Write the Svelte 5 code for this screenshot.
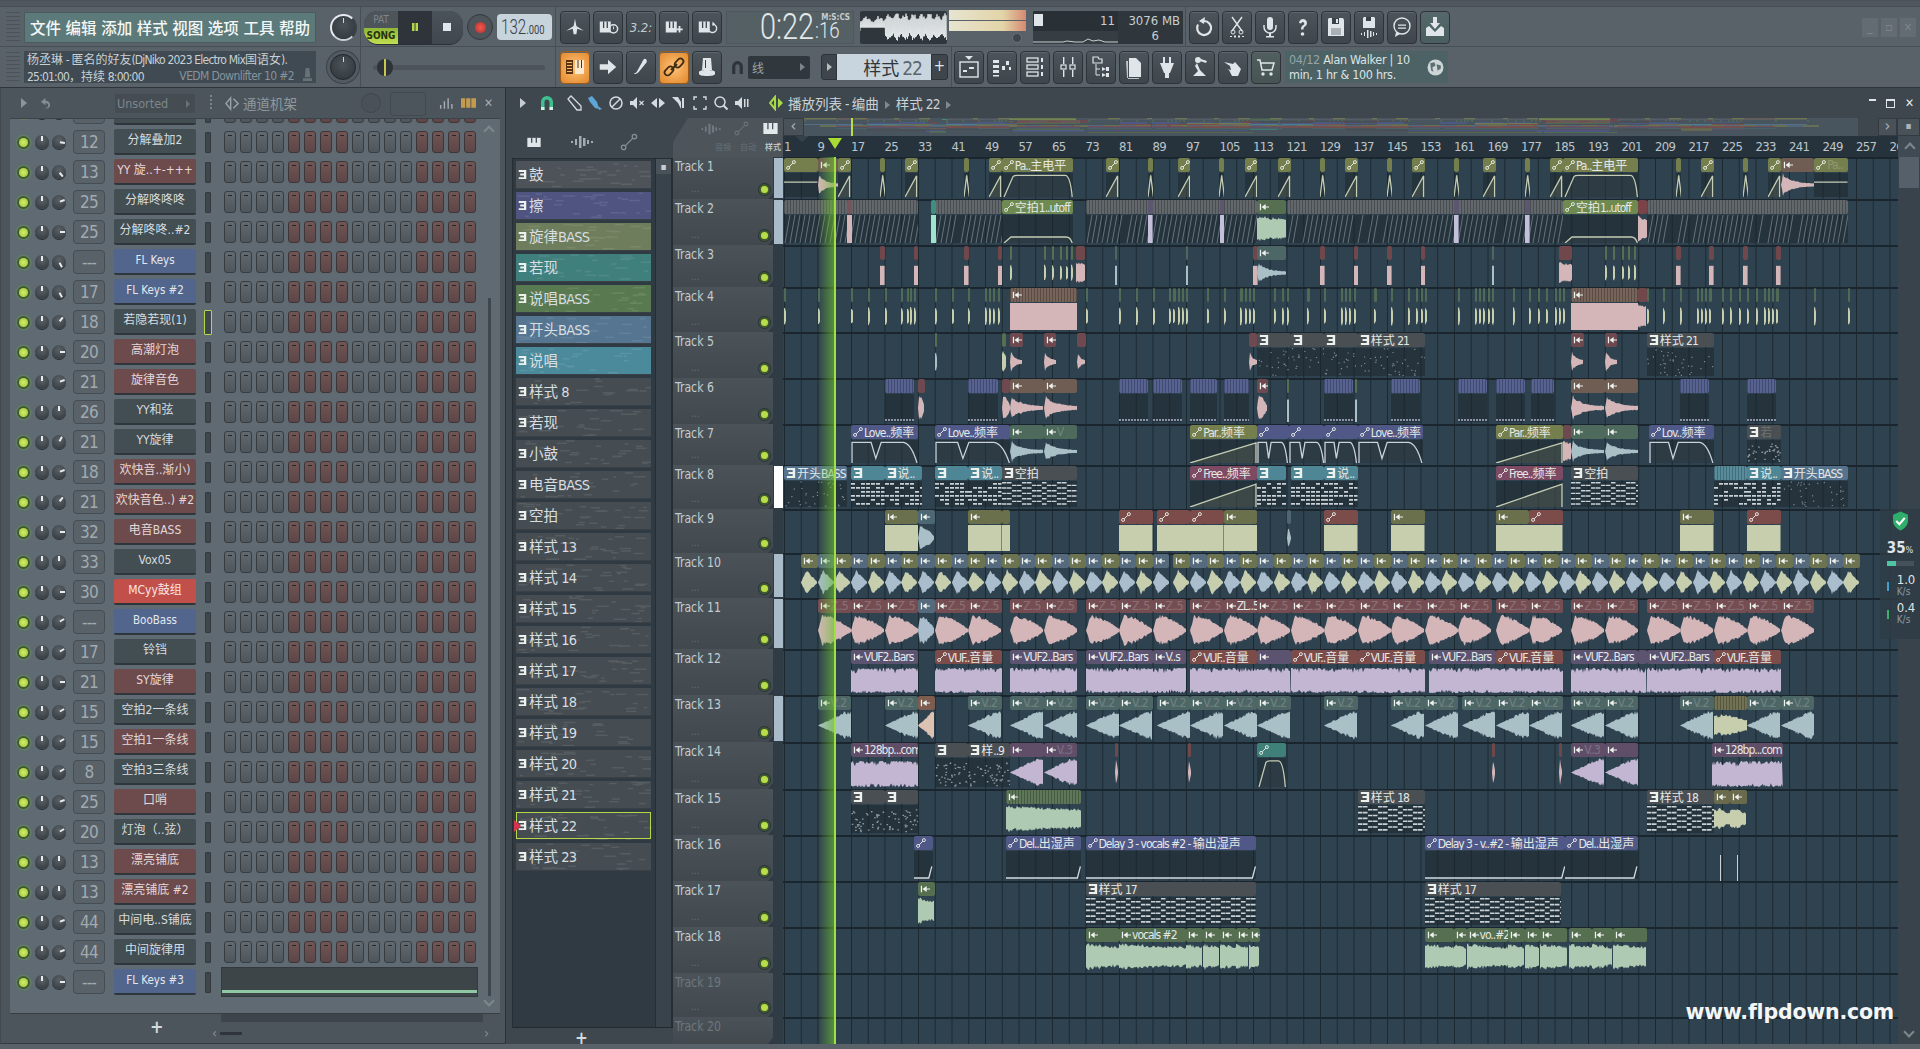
<script>
  const rng = (seed) => {
    let s = (seed * 7919 + 17) % 233280;
    return () => (s = (s * 9301 + 49297) % 233280) / 233280;
  };
  const f = (n) => Math.round(n * 10) / 10;
  // split a label in latin and chinese runs, the latin ones get squeezed
  const runs = (s) => s.split(/([\u3000-\u9fff\uff00-\uffef]+)/).filter(Boolean).map((t) => ({ t, cj: /[\u3000-\u9fff\uff00-\uffef]/.test(t) }));

  // ---------- toolbar icons ----------
  const slit = '#3a4248';
  const piano = `<path d="M3 6h12v12H3z"/><path fill="${slit}" d="M6.5 6h1.4v7H6.5zM10.5 6h1.4v7h-1.4z"/>`;
  const icons = {
    tuner: '<path d="M12 3l1.5 8 8 5-7-2-1 6h-3l-1-6-7 2 8-5z"/>',
    clock: piano + '<circle cx="18" cy="14" r="4.5" fill="none" stroke="#dfe5e8" stroke-width="1.6"/><path d="M17.5 11.5h1v3h-1z"/>',
    add: piano + '<path d="M17 11h2v2.500h2.500v2H19V18h-2v-2.500h-2.500v-2H17z"/>',
    loop: piano + '<path d="M18 9a4.500 4.500 0 1 1-4 2.500" fill="none" stroke="#dfe5e8" stroke-width="1.500"/><path d="M18 6l3 3-3 2z"/>',
    reset: '<path d="M12 6a7 7 0 1 1-6 3.500" fill="none" stroke="#dfe5e8" stroke-width="2.200"/><path d="M13 2l-1 7-5-3z"/>',
    scissors: '<path d="M7 2l10 14M17 2L7 16" stroke="#dfe5e8" stroke-width="1.400" fill="none"/><circle cx="8" cy="17" r="2" fill="none" stroke="#dfe5e8"/><circle cx="16" cy="17" r="2" fill="none" stroke="#dfe5e8"/><path d="M5 21h2v1H5zM9 20.500h2v2H9zM13 20.500h2v2h-2zM17 21h2v1h-2z"/>',
    mic: '<rect x="9" y="2" width="6" height="13" rx="3"/><path d="M6 10v2a6 6 0 0 0 12 0v-2" fill="none" stroke="#dfe5e8" stroke-width="1.500"/><path d="M11 18h2v3h3v1.500H8V21h3z"/>',
    help: '<path d="M8 8a4 4 0 1 1 6 3.500c-1.300.8-1.500 1.500-1.500 3h-2.500c0-2.500.6-3.500 2-4.300 1-.6 1.300-1 1.300-1.700a1.500 1.500 0 0 0-3 0z"/><circle cx="11.500" cy="19" r="1.800"/>',
    save: '<path d="M5 3h14l1 2v16H4V4z"/><path fill="#3a4248" d="M8 3h7v6H8z"/><path fill="#dfe5e8" d="M12 4h2v4h-2z"/><path fill="#aab2b8" d="M7 13h10v7H7z"/>',
    savewave: '<path d="M7 2h10l1 1v10H6V3z"/><path fill="#3a4248" d="M9 2h5v4H9z"/><path d="M4 18h1v2H4zM7 17h1v4H7zM10 15h1.500v8H10zM13 16h1.500v6H13zM16 17h1v4h-1zM19 18h1v2h-1z"/>',
    chat: '<circle cx="12" cy="11" r="8" fill="none" stroke="#dfe5e8" stroke-width="1.400"/><path d="M8 9.500h8v1.200H8zM8 12.500h8v1.200H8zM6 17l-1 5 5-3z"/>',
    download: '<path d="M10 2h4v6h3l-5 6-5-6h3z"/><path d="M3 13l3-2 6 6 6-6 3 2v8H3z"/>',
    arrow: '<path d="M3 9h9V4l9 8-9 8v-5H3z"/>',
    tail: '<path d="M16 3c2 0 3 2 2 4l-8 10c-2 3-5 3-6 2 2 0 3-1 4-3l5-9c1-2 2-4 3-4z"/>',
    link: '<path d="M9 15l6-6" stroke="#3c2a12" stroke-width="2" fill="none"/><rect x="2" y="13" width="10" height="6" rx="3" transform="rotate(-45 7 16)" fill="none" stroke="#3c2a12" stroke-width="1.700"/><rect x="12" y="5" width="10" height="6" rx="3" transform="rotate(-45 17 8)" fill="none" stroke="#3c2a12" stroke-width="1.700"/>',
    stack: '<path d="M8 3h8l1 12H7z"/><path d="M4 17c0-1 2-2 8-2s8 1 8 2v2c0 1-3 2-8 2s-8-1-8-2z"/><path fill="#3a4248" d="M10 5h1v8h-1z"/>',
    roll: '<path d="M3 5h7v14H3z" fill="#5a3410"/><path fill="#ffb765" d="M4 7h5v1H4zM4 10h5v1H4zM4 13h5v1H4zM4 16h5v1H4z"/><path fill="#fbe8cf" d="M12 5h9v14h-9z"/><path fill="#5a3410" d="M14.500 5h1v8h-1zM18 5h1v8h-1z"/>',
    plist: '<path d="M8 1h8l-4 4z"/><rect x="3" y="7" width="18" height="15" fill="none" stroke="#dfe5e8" stroke-width="1.400"/><path d="M6 15h4v2H6zM12 12h5v2h-5z"/>',
    steps: '<path d="M3 5h6v3H3zM3 10h6v3H3zM3 15h6v3H3zM3 20h6v1.500H3z"/><path d="M12 11h3v4h-3zM16 6h3v4h-3zM19 12h2v3h-2z"/>',
    chans: '<g fill="none" stroke="#dfe5e8" stroke-width="1.300"><rect x="4" y="3" width="11" height="4"/><rect x="4" y="10" width="11" height="4"/><rect x="4" y="17" width="11" height="4"/></g><path d="M18 3h2v4h-2zM18 10h2v4h-2zM18 17h2v4h-2z"/>',
    mixer: '<path d="M7 2h1.400v7H7zM7 15h1.400v7H7zM16 2h1.400v7H16zM16 15h1.400v7H16z"/><g fill="none" stroke="#dfe5e8" stroke-width="1.200"><rect x="5" y="10" width="5" height="4"/><rect x="14" y="10" width="5" height="4"/></g>',
    tree: '<path d="M4 2h5l1 2h3v4H4z" fill="none" stroke="#dfe5e8" stroke-width="1.200"/><path d="M7 9v11h4M7 14h4" fill="none" stroke="#dfe5e8"/><path d="M13 12l4 2-4 2zM17 12h3v4h-3zM13 18l4 2-4 2zM17 18h3v4h-3z"/>',
    docs: '<path d="M7 3h7l5 5v14H7z"/><path d="M4 6h2v18h11v-1H5z" opacity=".8"/>',
    plug: '<path d="M8 2h2v6H8zM14 2h2v6h-2zM5 8h14l-4 10h-1v5h-4v-5H9z"/>',
    pedal: '<circle cx="10" cy="5" r="3"/><path d="M9 8l3 7 6 6H5l5-5-3-5zM13 4l6 2-1 2-6-2z"/>',
    hand: '<path d="M3 7l9 2 2-2 6 7-3 7H11l-3-6-2-1 4 1-1-4z"/>',
    cart: '<path d="M3 5h3l2 10h10l2-7H7" fill="none" stroke="#dfe5e8" stroke-width="1.500"/><circle cx="9" cy="19" r="1.700"/><circle cx="17" cy="19" r="1.700"/>'
  };
  const rowOneLeft = ['tuner', 'clock', null, 'add', 'loop'];
  const rowOneRight = ['reset', 'scissors', 'mic', 'help', 'save', 'savewave', 'chat', 'download'];
  const rowTwoRight = ['plist', 'steps', 'chans', 'mixer', 'tree', 'docs', 'plug', 'pedal', 'hand', 'cart'];
  const menu = ['文件', '编辑', '添加', '样式', '视图', '选项', '工具', '帮助'];

  // ---------- channel rack ----------
  const channels = [
    ['12', '分解叠加2', 'd', 100], ['13', 'YY  旋..+-+++', 'r', 140], ['25', '分解咚咚咚', 'd', 70], ['25', '分解咚咚..#2', 'd', 90],
    ['---', 'FL Keys', 'b', 150], ['17', 'FL Keys #2', 'b', 150], ['18', '若隐若现(1)', 'd', 40], ['20', '高潮灯泡', 'r', 90],
    ['21', '旋律音色', 'r', 70], ['26', 'YY和弦', 'd', 0], ['21', 'YY旋律', 'd', 30], ['18', '欢快音..渐小)', 'r', 70],
    ['21', '欢快音色..) #2', 'r', 40], ['32', '电音BASS', 'r', 90], ['33', 'Vox05', 'd', 0], ['30', 'MCyy鼓组', 'h', 90],
    ['---', 'BooBass', 'b', 60], ['17', '铃铛', 'd', 60], ['21', 'SY旋律', 'r', 90], ['15', '空拍2一条线', 'd', 60],
    ['15', '空拍1一条线', 'r', 60], ['8', '空拍3三条线', 'd', 60], ['25', '口哨', 'r', 70], ['20', '灯泡（..弦）', 'd', 60],
    ['13', '漂亮铺底', 'r', 0], ['13', '漂亮铺底 #2', 'r', 0], ['44', '中间电..S铺底', 'd', 70], ['44', '中间旋律用', 'd', 70],
    ['---', 'FL Keys #3', 'b', 90]
  ];
  const stepCells = Array.from({ length: 16 }, (_, i) => (i >= 4 && i < 8) || i >= 12);

  // ---------- pattern picker ----------
  const patterns = [
    ['鼓', 'c0'], ['擦', 'c1'], ['旋律BASS', 'c2'], ['若现', 'c3'], ['说唱BASS', 'c4'], ['开头BASS', 'c5'], ['说唱', 'c6'],
    ['样式 8', ''], ['若现', ''], ['小鼓', ''], ['电音BASS', ''], ['空拍', ''], ['样式 13', ''], ['样式 14', ''], ['样式 15', ''],
    ['样式 16', ''], ['样式 17', ''], ['样式 18', ''], ['样式 19', ''], ['样式 20', ''], ['样式 21', ''], ['样式 22', 'sel'], ['样式 23', '']
  ].map(([name, cls], i) => {
    const r = rng(i + 3);
    let d = '';
    for (let k = 0; k < 26; k++) {
      const w = f(3 + r() * 10);
      d += `M${f(r() * 130)} ${f(r() * 26)}h${w}v1.500h-${w}z`;
    }
    return { name, cls, d };
  });

  // ---------- playlist ----------
  const tops = [157, 199, 245, 287, 332, 378, 424, 465, 509, 553, 598, 649, 695, 742, 789, 835, 881, 927, 973, 1017, 1044];
  const tracks = tops.slice(0, -1).map((t, i) => ({ n: i + 1, h: tops[i + 1] - t }));
  const strips = { 0: '#a9bbc9', 1: '#a9bbc9', 7: '#ffffff', 9: '#a9bbc9', 10: '#a9bbc9', 12: '#a9bbc9' };
  const barLabels = Array.from({ length: 34 }, (_, i) => 1 + i * 8);
  const barX = (b) => 1 + (b - 1) * 4.1875;

  const OLIVE = '#757f4e', BROWN = '#6f5c52', RED = '#744e52', REDA = '#7c4c4a', PURP = '#5b5370', GRN = '#566f50', TEAL = '#4d6666',
    BLUE = '#4f5886', SLATE = '#566a7e', GREY = '#4a4f53', AQUA = '#4f8695', LGRN = '#6f8a50', STR = '#4f5a8a';
  const PINK = '#d4b6b8', CREAM = '#c6ceae', MINT = '#aecab2', ICE = '#a9c0c6', LILAC = '#c2b6d2', SKY = '#a9bdcc';

  const wave = (w, h, fn, seed, jit = 0.25) => {
    const r = rng(seed), m = h / 2;
    let up = `M0 ${f(m)}`, dn = '';
    for (let x = 0; x <= w; x += 1) {
      const a = fn(x / Math.max(w, 1)) * m * (1 - jit + jit * r());
      up += `L${x} ${f(m - a)}`;
      dn = `L${x} ${f(m + a * (0.85 + 0.15 * r()))}` + dn;
    }
    return up + dn + 'Z';
  };
  const waves = {
    decay: (u) => (u < 0.06 ? u / 0.06 : 0.12 + 0.88 * Math.exp(-3.2 * u)),
    fat: (u) => Math.min(1, u * 8) * (1 - 0.92 * u * u),
    rise: (u) => Math.min(1, u * 1.25 + 0.01),
    diamond: (u) => Math.max(0.03, u < 0.3 ? u / 0.3 : (1 - u) / 0.7),
    block: () => 1,
    tap: (u) => 1 - 0.25 * u,
    spike: (u) => (u < 0.2 ? 0.7 : 1 - u * 0.6)
  };
  const pats = (kind, w, h, seed) => {
    const r = rng(seed);
    let d = '';
    if (kind === 'sparse') {
      for (let i = 0; i < w * 0.55; i++) d += `M${f(r() * w)} ${f(r() * h)}h1.200v1.200h-1.200z`;
    } else if (kind === 'zig') {
      for (let x = 0, c = 0; x < w; x += 5, c++) for (let y = 0; y < 9; y++) {
        if ((c + y * 2 + Math.floor(c / 8)) % 4 < 2) d += `M${x} ${f(1 + y * (h - 2) / 9)}h${Math.min(4.500, w - x)}v${f(h / 18)}h-${Math.min(4.500, w - x)}z`;
      }
    } else if (kind === 'rows') {
      for (let x = 0; x < w; x += 5) for (let y = 0; y < 6; y++) {
        if (r() > 0.45 || y === 3) d += `M${x} ${f(2 + y * (h - 2) / 6)}h${Math.min(4, w - x)}v1.800h-${Math.min(4, w - x)}z`;
      }
    } else if (kind === 'mid') {
      for (let i = 0; i < w * 1.1; i++) d += `M${f(r() * w)} ${f(h * 0.15 + r() * h * 0.8)}h1.600v1.300h-1.600z`;
    }
    return d;
  };

  const clips = [];
  let seed = 1;
  const add = (t, s, e, color, icon = '', label = '', shape = '', fill = '', head = '') => {
    const w = Math.max(f((e - s) * 4.1875), 2);
    const h = tops[t + 1] - tops[t] - 3;
    const bh = Math.max(h - 15, 4);
    seed += 1;
    let d = '', stroke = 'none', sw = 1.3, dark = true, fl = fill || 'none';
    if (waves[shape]) { d = wave(w, bh, waves[shape], seed); dark = false; }
    else if (shape === 'noise') {
      const r = rng(seed);
      d = `M0 ${bh}`;
      for (let x = 0; x <= w; x += 1) d += `L${x} ${f(bh * 0.1 + r() * r() * bh * 0.22)}`;
      d += `L${w} ${bh}`;
      for (let x = w; x >= 0; x -= 1) d += `L${x} ${f(bh - r() * r() * bh * 0.14)}`;
      d += 'Z';
      dark = false;
    } else if (shape === 'solid') { d = `M0 0H${w}V${bh}H0Z`; dark = false; }
    else if (shape === 'low') { d = `M0 ${f(bh * 0.2)}H${w}V${bh}H0Z`; dark = false; }
    else if (shape === 'flat') { d = `M0 ${f(bh * 0.38)}H${w}`; stroke = '#c4cdb4'; }
    else if (shape === 'ramp') { d = `M0 ${bh}L${w - 1} ${f(bh * 0.12)}V${bh}`; stroke = '#c4cdb4'; fl = 'rgba(140,150,110,.22)'; }
    else if (shape === 'peak') { d = `M0 ${bh}L${f(w * 0.5)} ${f(bh * 0.1)}L${w} ${bh}`; stroke = '#c4cdb4'; }
    else if (shape === 'trap') { const k = Math.min(8, w * 0.2); d = `M2 ${bh}L${f(k + 3)} ${f(bh * 0.15)}Q${f(k + 4)} ${f(bh * 0.1)} ${f(k + 7)} ${f(bh * 0.1)}H${w - 8}Q${w - 3} ${f(bh * 0.1)} ${w - 1} ${bh}`; stroke = '#c4cdb4'; fl = 'rgba(255,255,255,.04)'; }
    else if (shape === 'trapl') { d = `M2 ${bh}L9 ${bh - 6}H${w - 7}Q${w - 3} ${bh - 6} ${w - 1} ${bh}`; stroke = '#c4cdb4'; fl = 'rgba(255,255,255,.04)'; }
    else if (shape === 'notch') { d = `M1 ${bh}V${f(bh * 0.1)}H${f(w * 0.3)}L${f(w * 0.37)} ${f(bh * 0.8)}L${f(w * 0.45)} ${f(bh * 0.1)}H${f(w * 0.78)}Q${f(w * 0.9)} ${f(bh * 0.15)} ${w - 1} ${bh}`; stroke = '#c9d2dc'; fl = 'rgba(255,255,255,.04)'; }
    else if (shape === 'hold') { d = `M0 ${bh - 1}H${w - 4}L${w - 1} ${f(bh * 0.55)}`; stroke = '#d5dbe2'; }
    else if (shape === 'hatch') {
      const r = rng(seed);
      for (let x = 1; x < w; x += 5) if (r() > 0.08) d += `M${x} ${bh}L${x + 5} 0`;
      stroke = 'rgba(190,200,205,.55)'; sw = 0.8;
    } else if (shape === 'dotted') {
      for (let x = 0; x < w; x += 3) d += `M${x} ${bh - 3}h2v2h-2z`;
      fl = '#8c93a8';
    } else if (['sparse', 'zig', 'rows', 'mid'].includes(shape)) { d = pats(shape, w, bh, seed); }
    if (shape === 'sparse') fl = '#7f8a90';
    else if (shape === 'zig' || shape === 'rows') fl = fill || '#c9d1d5';
    else if (shape === 'mid') fl = '#8e989d';
    clips.push({ x: barX(s), y: tops[t] - 157 + 1, w, h, bh, color, icon, label: runs(label), d, fl, stroke, sw, dark, head });
  };
  const many = (t, list, fn) => list.forEach((l) => (Array.isArray(l) ? fn(t, l[0], l[1]) : fn(t, l, l + 0.8)));

  // track 1
  add(0, 1, 9, OLIVE, 'a', '', 'flat');
  add(0, 9, 14, BROWN, 'w', '', 'decay', PINK);
  many(0, [[14, 17], [30, 33], [50, 53], [78, 81], [95, 98], [111, 114], [119, 122], [135, 138], [151, 154], [168, 171], [184, 187], [220, 223], [236, 239]], (t, a, b) => add(t, a, b, OLIVE, 'a', '', 'ramp'));
  many(0, [24, 44, 88, 105, 129, 145, 161, 178, 214, 230], (t, a) => add(t, a - 0.1, a + 1.2, OLIVE, '', '', 'peak'));
  add(0, 53, 70, OLIVE, 'a', 'Pa..主电平', 'trap');
  add(0, 187, 205, OLIVE, 'a', 'Pa..主电平', 'trap');
  add(0, 239, 247, BROWN, 'w', '', 'decay', PINK);
  add(0, 247, 255, OLIVE, 'a', 'Pa..', 'flat', '', 'dl');
  // track 2
  many(1, [[1, 33], [37, 53], [73, 114], [121, 187], [207, 255]], (t, a, b) => add(t, a, b, '#5a5f63', '', '', 'hatch', '', 'hs'));
  add(1, 36, 37.2, '#3f8f80', '', '', 'solid', '#9fe3cb');
  add(1, 16, 17.2, '#75545a', '', '', 'solid', PINK);
  many(1, [88, 105, 161, 178], (t, a) => add(t, a, a + 1.1, '#5d5670', '', '', 'solid', '#c4c0dc'));
  add(1, 53, 70, LGRN, 'a', '空拍1..utoff', 'trapl');
  add(1, 187, 205, LGRN, 'a', '空拍1..utoff', 'trapl');
  add(1, 114, 121, GRN, 'w', '', 'tap', MINT);
  add(1, 205, 207.200, '#7a4348', '', '', 'tap', PINK);
  // track 3
  many(2, [24, 32, 44, 52, 113, 129, 137, 145, 153, 214, 222, 230, 238], (t, a) => add(t, a, a + 1.1, '#70484c', '', '', 'low', PINK));
  many(2, [55, 63, 65, 67, 68.4, 69.6, 197, 199, 201, 202.6, 204], (t, a) => add(t, a, a + 0.5, GRN, '', '', 'spike', CREAM));
  many(2, [80, 97, 170], (t, a) => add(t, a, a + 0.5, '#4d6660', '', '', 'low', ICE));
  add(2, 70.7, 73, '#70484c', '', '', 'tap', PINK);
  add(2, 186, 189.3, '#70484c', '', '', 'tap', PINK);
  add(2, 114, 121, TEAL, 'w', '', 'decay', ICE);
  // track 4
  const pulses = [1, 9, 17, 21, 25, 29, 30.4, 31, 32, 37, 41, 45, 49, 50, 51, 52, 73, 81, 85, 89, 93, 94, 95, 96, 97, 102, 106, 110, 111, 112, 113, 118, 120, 121, 126, 130, 134, 135, 136, 137, 142, 146, 150, 152, 153, 154, 162, 166, 167, 168, 169, 170, 175, 179, 181, 183, 185, 186, 187, 207, 211, 215, 219, 220, 221, 222, 225, 227, 229, 231, 233, 235, 236, 237, 238, 247, 255];
  many(3, pulses, (t, a) => add(t, a, a + 0.5, '#4f6a55', '', '', 'spike', CREAM));
  add(3, 55, 71, BROWN, 'w', '', 'solid', PINK, 'hs');
  add(3, 189, 205, BROWN, 'w', '', 'solid', PINK, 'hs');
  add(3, 205, 207, '#70484c', 'w', '', 'tap', PINK);
  // track 5
  add(4, 37, 37.4, GRN, '', '', 'spike', ICE);
  add(4, 53, 54, GRN, '', '', 'spike', CREAM);
  many(4, [[55, 58], [63, 66], [71, 73], [112, 114], [189, 192], [197, 200]], (t, a, b) => add(t, a, b, '#6e4a50', b - a > 2 ? 'w' : '', '', 'decay', PINK));
  many(4, [[114, 122], [122, 130], [130, 138]], (t, a, b) => add(t, a, b, GREY, 'p', '', 'sparse'));
  add(4, 138, 154, GREY, 'p', '样式 21', 'sparse');
  add(4, 207, 223, GREY, 'p', '样式 21', 'sparse');
  // track 6
  many(5, [[25, 32], [45, 52], [81, 88], [89, 96], [98, 104.5], [106, 112], [130, 137], [146, 153], [162, 169], [171, 178], [179.5, 185], [215, 222], [231, 238]], (t, a, b) => add(t, a, b, STR, '', '', 'dotted', '', 'hs'));
  many(5, [[33, 34.6], [53, 55], [114, 116.6]], (t, a, b) => add(t, a, b, '#6e4a50', b - a > 2 ? 'w' : '', '', 'fat', PINK));
  many(5, [[55, 63], [63, 71], [189, 197], [197, 205]], (t, a, b) => add(t, a, b, BROWN, 'w', '', 'decay', PINK));
  add(5, 121, 121.5, GRN, '', '', 'low', ICE);
  add(5, 137.4, 137.8, GRN, '', '', 'low', ICE);
  // track 7
  add(6, 17, 33, BLUE, 'a', 'Love..频率', 'notch');
  add(6, 37, 55, BLUE, 'a', 'Love..频率', 'notch');
  add(6, 55, 63, '#4e6a5c', 'w', '', 'decay', ICE);
  add(6, 63, 71, '#4e6a5c', 'w', 'V', 'decay', ICE, 'dl');
  add(6, 98, 114, OLIVE, 'a', 'Par..频率', 'ramp');
  many(6, [[114, 121.5], [121.5, 130], [130, 138]], (t, a, b) => add(t, a, b, BLUE, 'a', '', 'notch'));
  add(6, 138, 153.5, BLUE, 'a', 'Love..频率', 'notch');
  add(6, 171, 187, OLIVE, 'a', 'Par..频率', 'ramp');
  add(6, 187, 189, '#6e4a50', 'w', '', 'tap', PINK);
  add(6, 189, 197, '#4e6a5c', 'w', '', 'decay', ICE);
  add(6, 197, 205, '#4e6a5c', 'w', '', 'decay', ICE);
  add(6, 207.5, 223, BLUE, 'a', 'Lov..频率', 'notch');
  add(6, 231, 239, GREY, 'p', '若', 'mid', '', 'dl');
  // track 8
  add(7, 1, 16, '#56738e', 'p', '开头BASS', 'sparse');
  add(7, 17, 25, AQUA, 'p', '', 'rows');
  add(7, 25, 34, AQUA, 'p', '说..', 'rows');
  add(7, 37, 45, AQUA, 'p', '', 'rows');
  add(7, 45, 53, AQUA, 'p', '说..', 'rows');
  add(7, 53, 71, GREY, 'p', '空拍', 'zig');
  add(7, 98, 114, '#7d4a64', 'a', 'Free..频率', 'ramp');
  add(7, 114, 121, AQUA, 'p', '', 'rows');
  add(7, 122, 130, AQUA, 'p', '', 'rows');
  add(7, 130, 138, AQUA, 'p', '说..', 'rows');
  add(7, 171, 187, '#7d4a64', 'a', 'Free..频率', 'ramp');
  add(7, 189, 205, GREY, 'p', '空拍', 'zig');
  add(7, 223, 231, AQUA, '', '', 'rows', '', 'hs');
  add(7, 231, 239, AQUA, 'p', '说..', 'rows');
  add(7, 239, 255, '#56738e', 'p', '开头BASS', 'sparse');
  // track 9
  add(8, 25, 33, '#6a6f4c', 'w', '', 'solid', CREAM);
  add(8, 33, 37, '#4d6872', 'w', '', 'fat', ICE);
  add(8, 45, 53, '#6a6f4c', 'w', '', 'solid', CREAM);
  add(8, 53, 55, '#6a6f4c', '', '', 'solid', CREAM);
  many(8, [[81, 89], [90, 98], [98, 106], [130, 138], [179, 187], [231, 239]], (t, a, b) => add(t, a, b, REDA, 'a', '', 'solid', CREAM));
  many(8, [[106, 114], [146, 154], [171, 179], [215, 223]], (t, a, b) => add(t, a, b, '#6a6f4c', 'w', '', 'solid', CREAM));
  add(8, 121, 122, '#4d6872', '', '', 'diamond', ICE);
  // track 10
  for (let b = 5, i = 0; b < 255; b += 4, i++) {
    if (b === 93 || b === 165) { b += 1; }
    add(9, b, b + 4, i % 2 ? SLATE : '#6c7351', 'w', '', 'diamond', i % 2 ? SKY : CREAM);
  }
  // track 11
  [9, 17, 25, 37, 45, 55, 63, 73, 81, 89, 98, 114, 122, 130, 138, 146, 154, 162, 171, 179, 189, 197, 207, 215, 223, 231, 239].forEach((a) => add(10, a, a + 8, RED, 'w', 'Z..5', 'fat', PINK, 'dl'));
  add(10, 106, 114, RED, 'w', 'ZL..5', 'fat', PINK);
  add(10, 33, 37, SLATE, 'w', '', 'fat', SKY);
  // track 12
  [[17, 33, 'VUF2..Bars', 0], [37, 53, 'VUF..音量', 1], [55, 71, 'VUF2..Bars', 0], [73, 89, 'VUF2..Bars', 0], [89, 97, 'V..s', 0], [98, 114, 'VUF..音量', 1], [114, 122, '', 0], [122, 138, 'VUF..音量', 1], [138, 154, 'VUF..音量', 1], [155, 171, 'VUF2..Bars', 0], [171, 187, 'VUF..音量', 1], [189, 205, 'VUF2..Bars', 0], [205, 207, '', 0], [207, 223, 'VUF2..Bars', 0], [223, 239, 'VUF..音量', 1]].forEach(([a, b, l, auto]) => add(11, a, b, auto ? REDA : PURP, auto ? 'a' : 'w', l, 'noise', LILAC));
  // track 13
  [9, 25, 45, 55, 63, 73, 81, 90, 98, 106, 114, 130, 146, 154, 163, 171, 179, 189, 197, 215, 231, 239].forEach((a) => add(12, a, a + 8, TEAL, 'w', 'V..2', 'rise', ICE, 'dl'));
  add(12, 33, 37, '#7d5d50', 'w', '', 'rise', '#dcc2b2');
  add(12, 223, 231, '#6a6a4c', '', '', 'spike', CREAM, 'hs');
  // track 14
  add(13, 17, 33, '#604e68', 'w', '128bp...com', 'noise', LILAC);
  add(13, 37, 45, GREY, 'p', '', 'mid');
  add(13, 45, 55, GREY, 'p', '样..9', 'mid');
  add(13, 55, 63, '#604e68', 'w', '', 'rise', LILAC);
  add(13, 63, 71, '#604e68', 'w', 'V..3', 'rise', LILAC, 'dl');
  many(13, [80, 97.5, 170, 186], (t, a) => add(t, a, a + 0.8, '#70484c', '', '', 'diamond', PINK));
  add(13, 114, 121, '#3f8078', 'a', '', 'trap');
  add(13, 189, 197, '#604e68', 'w', 'V..3', 'rise', LILAC, 'dl');
  add(13, 197, 205, '#604e68', 'w', '', 'rise', LILAC);
  add(13, 222.6, 239.5, '#604e68', 'w', '128bp...com', 'noise', LILAC);
  // track 15
  add(14, 17, 25, GREY, 'p', '', 'mid');
  add(14, 25, 33, GREY, 'p', '', 'mid');
  add(14, 54, 72, GRN, 'w', '', 'tap', MINT, 'hs');
  add(14, 138, 154, GREY, 'p', '样式 18', 'zig');
  add(14, 207, 223, GREY, 'p', '样式 18', 'zig');
  add(14, 223, 227, '#6a6a4c', 'w', '', 'spike', CREAM);
  add(14, 227, 231, '#6a6a4c', 'w', '', 'spike', CREAM);
  // track 16
  add(15, 32, 36.5, BLUE, 'a', '', 'hold');
  add(15, 54, 72, BLUE, 'a', 'Del..出湿声', 'hold');
  add(15, 73, 113.7, BLUE, 'a', 'Delay 3 - vocals #2 - 输出湿声', 'hold');
  add(15, 154, 187.6, BLUE, 'a', 'Delay 3 - v..#2 - 输出湿声', 'hold');
  add(15, 187.6, 205, BLUE, 'a', 'Del..出湿声', 'hold');
  // track 17
  add(16, 33, 37, GRN, 'w', '', 'tap', MINT);
  add(16, 73, 113.7, GREY, 'p', '样式 17', 'zig');
  add(16, 154, 186.6, GREY, 'p', '样式 17', 'zig');
  // track 18
  [[73, 81, ''], [81, 97, 'vocals #2'], [97, 101, ''], [101, 105, ''], [105, 109, ''], [109, 112, ''], [112, 114.6, ''], [154, 161, ''], [161, 164, ''], [164, 174, 'vo..#2'], [174, 178, ''], [178, 181.5, ''], [181.5, 188, ''], [188.5, 194, ''], [194, 199, ''], [199, 207, '']].forEach(([a, b, l]) => add(17, a, b, GRN, 'w', l, 'tap', MINT));
  // thin markers on track 16
  const markers = [[224.5, tops[15] + 20, 26], [228.5, tops[15] + 20, 26]];

  // overview strip of the whole song
  const over = clips.map((c) => ({
    x: f((c.x - 1) * 0.943),
    y: f((c.y / 890) * 16),
    w: Math.max(f(c.w * 0.943), 1),
    color: c.color
  }));

  const mini = (() => {
    const r = rng(5);
    let d = 'M0 20';
    for (let x = 0; x < 87; x += 1) {
      const env = x < 25 ? 5 + 6 * Math.abs(Math.sin(x / 4)) : 14 * (0.55 + 0.45 * Math.abs(Math.sin(x / 2.6)));
      d += `L${x} ${f(16 - env * (0.7 + 0.3 * r()))}L${x + 0.5} ${f(16 + (x < 25 ? 0.5 : env * (0.7 + 0.3 * r())))}`;
    }
    return d;
  })();
</script>

{#snippet txt(s)}{#each runs(s) as r}<span class={r.cj ? 'cj' : 'lat'}>{r.t}</span>{/each}{/snippet}

<svg class="defs" aria-hidden="true">
  <symbol id="i-a" viewBox="0 0 12 12"><circle cx="2.500" cy="9.500" r="1.800" fill="none" stroke="#eef2ee" stroke-width="1.100" /><circle cx="9.500" cy="2.500" r="1.800" fill="none" stroke="#eef2ee" stroke-width="1.100" /><path d="M3.800 8.200L8.200 3.800" stroke="#eef2ee" stroke-width="1.100" /></symbol>
  <symbol id="i-w" viewBox="0 0 12 12"><path d="M1 2h1.500v8H1zM3 6l5-3.500v7zM8 5.300h4v1.400H8z" fill="#eef2ee" /></symbol>
  <symbol id="i-p" viewBox="0 0 12 12"><path d="M8 0h3v12H8zM1 0h7v2.500H1zM3 4.700h5v2.500H3zM1 9.500h7V12H1z" fill="#eef2ee" /></symbol>
</svg>

<div class="app">
  <header class="top">
    <div class="row">
      <i class="grip"></i>
      <nav class="menu">{#each menu as m}<span>{m}</span>{/each}</nav>
      <div class="kcell"><div class="bigknob arc"><i></i></div></div>
      <div class="tcell">
        <div class="pill">
          <div class="songsw"><span class="pat">PAT</span><span class="song">SONG</span></div>
          <div class="pbtn dark"><svg viewBox="0 0 12 12" width="12" height="12"><path d="M3 2h2.500v8H3zM6.500 2H9v8H6.500z" fill="#b5d84a" /></svg></div>
          <div class="pbtn"><svg viewBox="0 0 12 12" width="12" height="12"><path d="M2 2h8v8H2z" fill="#dfe5e8" /></svg></div>
        </div>
        <div class="rec"><i></i></div>
        <div class="tempo"><span class="tv"><b>132</b><small>.000</small></span></div>
      </div>
      <div class="tools g1">
        {#each rowOneLeft as ic}
          <div class="tb">
            {#if ic}<svg viewBox="0 0 24 24" width="22" height="22" fill="#dfe5e8">{@html icons[ic]}</svg>{:else}<span class="ratio">3.2:</span>{/if}
          </div>
        {/each}
      </div>
      <div class="time"><span class="mscs">M:S:CS</span><span class="big">0:22</span><span class="sm">:16</span></div>
      <div class="scope"><svg width="87" height="33"><path d={mini} stroke="#e3e8ea" stroke-width=".9" fill="none" /></svg></div>
      <div class="vols"><i></i><i></i><b class="tiny"></b></div>
      <div class="mon">
        <div class="cpu"><i class="pk"></i><span class="n1">11</span><svg class="graph" width="85" height="10"><path d="M0 8H30L34 7L42 8H50L55 5L60 7L66 6L72 8H85" stroke="#c7ced2" fill="none" /></svg></div>
        <div class="mem"><span>3076 MB</span><span class="n2">6</span></div>
      </div>
      <div class="tools g2">
        {#each rowOneRight as ic}
          <div class="tb" class:lit={ic === 'download'}><svg viewBox="0 0 24 24" width="24" height="24" fill="#dfe5e8">{@html icons[ic]}</svg></div>
        {/each}
      </div>
      <div class="win"><i>_</i><i>▫</i><i>×</i></div>
    </div>
    <div class="row">
      <i class="grip"></i>
      <div class="song-panel">
        <div>{@render txt('杨丞琳 - 匿名的好友(DjNiko 2023 Electro Mix国语女).')}</div>
        <div class="l2"><span>{@render txt('25:01:00，持续 8:00:00')}</span><span class="dim">VEDM Downlifter 10 #2</span></div>
        <svg class="bell" viewBox="0 0 12 16" width="11" height="15"><path d="M4 1h4l1 10H3zM1 12h10v3H1z" fill="#667178" /></svg>
      </div>
      <div class="kcell"><div class="bigknob dots"><i></i></div></div>
      <div class="tcell slider"><div class="track"><div class="handle"></div></div></div>
      <div class="tools g1">
        <div class="tb on"><svg viewBox="0 0 24 24" width="24" height="24">{@html icons.roll}</svg></div>
        <div class="tb"><svg viewBox="0 0 24 24" width="22" height="22" fill="#dfe5e8">{@html icons.arrow}</svg></div>
        <div class="tb"><svg viewBox="0 0 24 24" width="22" height="22" fill="#dfe5e8">{@html icons.tail}</svg></div>
        <div class="tb on"><svg viewBox="0 0 24 24" width="24" height="24">{@html icons.link}</svg></div>
        <div class="tb"><svg viewBox="0 0 24 24" width="24" height="24" fill="#dfe5e8">{@html icons.stack}</svg></div>
      </div>
      <svg class="magnet" viewBox="0 0 12 14" width="13" height="15"><path d="M1 13V6a5 5 0 0 1 10 0v7H8V6a2 2 0 0 0-4 0v7z" fill="#2e3439" /></svg>
      <div class="snap"><span>线</span><em></em></div>
      <div class="patbox">
        <div class="parr"><em></em></div>
        <div class="pname"><b>样式</b><span>22</span></div>
        <div class="pplus">+</div>
      </div>
      <div class="tools g3">
        {#each rowTwoRight as ic}
          <div class="tb" class:cart={ic === 'cart'}><svg viewBox="0 0 24 24" width="24" height="24" fill="#dfe5e8">{@html icons[ic]}</svg></div>
        {/each}
      </div>
      <div class="news">
        <div class="txt"><span class="dimn">04/12</span>  Alan Walker | 10<br />min, 1 hr &amp; 100 hrs.</div>
        <svg viewBox="0 0 16 16" width="17" height="17"><circle cx="8" cy="8" r="7.500" fill="#cdd5d6" /><path d="M3 4l4-1 1 3-3 2 1 4-2-1zM9 5l4 1 0 3-3 2z" fill="#5c6f73" /></svg>
      </div>
    </div>
  </header>

  <main class="panes">
    <section class="rack">
      <div class="rbar">
        <svg class="tri" viewBox="0 0 6 10" width="6" height="10"><path d="M0 0l6 5-6 5z" fill="#8b949a" /></svg>
        <svg class="undo" viewBox="0 0 12 14" width="11" height="13"><path d="M6 1L1 5l5 4V6.500c2 0 3 1 3 2.500S8 12 5 12c4 1 6-1 6-3.500S9 4 6 4z" fill="#848d92" /></svg>
        <div class="unsorted"><span>Unsorted</span><em></em></div>
        <i class="vdots"></i>
        <svg class="spk" viewBox="0 0 16 16" width="15" height="15"><path d="M6 2L1 8l5 6zM9 3l5 5-5 5" fill="none" stroke="#9aa3a8" stroke-width="1.500" /></svg>
        <span class="rtitle">通道机架</span>
        <i class="rk"></i><i class="rbox"></i>
        <svg class="rbars" viewBox="0 0 16 12" width="15" height="12"><path d="M1 8h1.500v4H1zM5 4h1.500v8H5zM9 1h1.500v11H9zM13 7h1.500v5H13z" fill="#a5adb1" /></svg>
        <svg class="rgrid" viewBox="0 0 16 12" width="15" height="12"><path d="M0 1h4.500v10H0zM5.500 1H10v10H5.500zM11 1h5v10h-5z" fill="#c49a4e" /></svg>
        <span class="rx">✕</span>
      </div>
      <div class="rbody">
        <div class="rows">
          <div class="crow first">
            <i class="led"></i><i class="sk"></i><i class="sk"></i><b class="num"></b><b class="cbtn d"></b><i class="strip"></i>
            <div class="steps">{#each stepCells as red}<i class="st" class:red></i>{/each}</div>
          </div>
          {#each channels as [num, name, kind, rot], i}
            <div class="crow">
              <i class="led"></i>
              <i class="sk"></i>
              <i class="sk"><u style="transform:rotate({rot}deg)"></u></i>
              <b class="num">{num}</b>
              <b class="cbtn {kind}">{name}</b>
              <i class="strip" class:sel={i === 6}></i>
              {#if i === channels.length - 1}
                <div class="proll"><i></i></div>
              {:else}
                <div class="steps">{#each stepCells as red}<i class="st" class:red></i>{/each}</div>
              {/if}
            </div>
          {/each}
        </div>
        <div class="vbar"><span class="cv up"></span><i></i><span class="cv dn"></span></div>
      </div>
      <div class="rfoot">
        <span class="plus">+</span>
        <div class="hbar"><i class="htrack"></i><div class="hctl"><span>‹</span><b></b><span>›</span></div></div>
      </div>
    </section>

    <section class="playlist">
      <div class="pbar">
        <svg viewBox="0 0 6 10" width="6" height="10" class="pt0"><path d="M0 0l6 5-6 5z" fill="#c6cdd1" /></svg>
        <svg viewBox="0 0 14 16" width="14" height="16" class="pt1"><path d="M1 15V7a6 6 0 0 1 12 0v8H9.500V7a2.500 2.500 0 0 0-5 0v8z" fill="#3fc08e" /><path d="M1 12h3.500v3H1zM9.500 12H13v3H9.500z" fill="#d5efe3" /></svg>
        <div class="ptools">
          <svg viewBox="0 0 16 16" width="16" height="16"><path d="M2 4l3-3 10 10v4h-4z" fill="none" stroke="#d5dbde" stroke-width="1.300" /></svg>
          <svg viewBox="0 0 16 16" width="16" height="16"><path d="M1 3l4-2 5 6 2 7-4-1-5-6z" fill="#5fa6d8" /><path d="M11 11l4 3-3 1z" fill="#5fa6d8" /></svg>
          <svg viewBox="0 0 16 16" width="16" height="16"><circle cx="8" cy="8" r="6" fill="none" stroke="#d5dbde" stroke-width="1.500" /><path d="M4 12l8-8" stroke="#d5dbde" stroke-width="1.500" /></svg>
          <svg viewBox="0 0 16 16" width="16" height="16"><path d="M1 6h3l4-4v12l-4-4H1z" fill="#d5dbde" /><path d="M10.500 6l4 4m0-4l-4 4" stroke="#d5dbde" stroke-width="1.200" /></svg>
          <svg viewBox="0 0 16 16" width="16" height="16"><path d="M7 3v10L1 8zM9 3l6 5-6 5z" fill="#d5dbde" /></svg>
          <svg viewBox="0 0 16 16" width="16" height="16"><path d="M1 2h6l3 5v7L7 8zM11 3h2v10h-2z" fill="#d5dbde" /></svg>
          <svg viewBox="0 0 16 16" width="16" height="16"><path d="M2 5V2h3M11 2h3v3M14 11v3h-3M5 14H2v-3" fill="none" stroke="#d5dbde" stroke-width="1.400" /></svg>
          <svg viewBox="0 0 16 16" width="16" height="16"><circle cx="7" cy="7" r="5" fill="none" stroke="#d5dbde" stroke-width="1.500" /><path d="M10.500 10.500l4 4" stroke="#d5dbde" stroke-width="2" /></svg>
          <svg viewBox="0 0 16 16" width="16" height="16"><path d="M1 6h3l4-4v12l-4-4H1zM10 4h1.500v8H10zM13 4h1.500v8H13z" fill="#d5dbde" /></svg>
        </div>
        <svg viewBox="0 0 14 16" width="14" height="16" class="pt2"><path d="M6 2L1 8l5 6z" fill="none" stroke="#a6d84a" stroke-width="2" /><path d="M9 3l5 5-5 5z" fill="#a6d84a" /></svg>
        <div class="crumb">{@render txt('播放列表 - 编曲')}<em></em>{@render txt('样式 22')}<em></em></div>
        <div class="pwin"><i class="min"></i><i class="box"></i><span>✕</span></div>
      </div>

      <div class="pmain">
        <aside class="picker">
          <div class="ptabs">
            <svg viewBox="0 0 24 24" width="20" height="20" fill="#dfe5e8"><path d="M4 7h16v11H4z" /><path fill="#3f474e" d="M8.500 7h1.500v6H8.500zM14 7h1.500v6H14z" /></svg>
            <svg viewBox="0 0 24 16" width="24" height="16" fill="#a3acb1"><path d="M1 7h2v2H1zM5 5h2v6H5zM9 2h2.500v12H9zM13 4h2.500v8H13zM17 6h2v4h-2zM21 7h2v2h-2z" /></svg>
            <svg viewBox="0 0 20 20" width="18" height="18" fill="none" stroke="#868f95" stroke-width="1.400"><circle cx="4" cy="16" r="2.500" /><circle cx="16" cy="4" r="2.500" /><path d="M6 14L14 6" /></svg>
          </div>
          <div class="pick-body">
            <div class="plist">
              {#each patterns as p}
                <div class="pi {p.cls}">
                  <svg class="pdeco" width="135" height="27"><path d={p.d} fill="#fff" opacity=".09" /></svg>
                  <svg class="pic" width="9" height="11"><use href="#i-p" /></svg>
                  <span class="pn">{@render txt(p.name)}</span>
                  {#if p.cls === 'sel'}<i class="cue"></i>{/if}
                </div>
              {/each}
            </div>
            <div class="pscroll"><span>▪</span></div>
          </div>
          <div class="pfoot">+</div>
        </aside>

        <div class="arr">
          <div class="rul">
            <div class="corner">
              <div class="cicons">
                <svg viewBox="0 0 24 16" width="22" height="14" fill="#70797e"><path d="M1 7h2v2H1zM5 5h2v6H5zM9 2h2.500v12H9zM13 4h2.500v8H13zM17 6h2v4h-2zM21 7h2v2h-2z" /></svg>
                <svg viewBox="0 0 20 20" width="15" height="15" fill="none" stroke="#6b7479" stroke-width="1.400"><circle cx="4" cy="16" r="2.500" /><circle cx="16" cy="4" r="2.500" /><path d="M6 14L14 6" /></svg>
                <svg viewBox="0 0 24 24" width="19" height="19" fill="#e3e8ea"><path d="M3 5h18v14H3z" /><path fill="#3f474e" d="M8 5h1.500v8H8zM14 5h1.500v8H14z" /></svg>
              </div>
              <div class="clabs"><span>音频</span><span>自动</span><b>样式</b></div>
            </div>
            <div class="rright">
              <div class="ovw">
                <div class="nav">‹</div>
                <div class="strip-ov">
                  {#each over as o}<i style="left:{o.x}px;top:{o.y}px;width:{o.w}px;background:{o.color}"></i>{/each}
                  <b class="ph"></b>
                </div>
                <div class="nav r">›</div>
                <div class="nav d">▪</div>
              </div>
              <div class="barline">
                <div class="bars">
                  {#each barLabels as b}<span style="left:{barX(b)}px">{b}</span>{/each}
                  <i class="fold"></i>
                  <i class="mark"></i>
                </div>
                <div class="upbtn"><span class="cv up"></span></div>
              </div>
            </div>
          </div>

          <div class="lanes">
            <div class="heads">
              {#each tracks as t}
                <div class="th" class:off={t.n > 18} style="height:{t.h}px">
                  <span>Track {t.n}</span>
                  {#if t.n < 20}<small>...</small><i class="tled"></i>{/if}
                </div>
              {/each}
            </div>
            <div class="marks">
              {#each tracks as t, i}
                <div class="mk" style="height:{t.h}px">{#if strips[i]}<i style="background:{strips[i]}"></i>{/if}</div>
              {/each}
            </div>
            <div class="canvas">
              {#each tracks as t, i}
                <i class="sep" style="top:{tops[i] - 157}px"></i>
              {/each}
              {#each clips as c}
                <div class="clip" style="left:{c.x}px;top:{c.y}px;width:{c.w}px;height:{c.h}px">
                  <div class="head" class:hs={c.head === 'hs'} class:dl={c.head === 'dl'} style="background-color:{c.color}">
                    {#if c.icon && c.w > 9}<svg class="ci" width="10" height="10"><use href="#i-{c.icon}" /></svg>{/if}
                    {#if c.label.length}<span class="lb">{#each c.label as r}<span class={r.cj ? 'cj' : 'lat'}>{r.t}</span>{/each}</span>{/if}
                  </div>
                  <svg class="bd" class:dark={c.dark} width={c.w} height={c.bh}><path d={c.d} fill={c.fl} stroke={c.stroke} stroke-width={c.sw} /></svg>
                </div>
              {/each}
              {#each markers as m}<i class="thin" style="left:{barX(m[0])}px;top:{m[1] - 157}px;height:{m[2]}px"></i>{/each}
              <i class="glow"></i>
              <i class="playhead"></i>
            </div>
            <div class="sbar"><i></i><span class="cv dn"></span></div>
            <div class="sec">
              <svg viewBox="0 0 16 18" width="17" height="20"><path d="M8 0l7 3v6c0 4-3 7-7 9-4-2-7-5-7-9V3z" fill="#2fae6b" /><path d="M4 9l3 3 5-6" fill="none" stroke="#fff" stroke-width="2" /></svg>
              <div class="pc"><b>35</b><small>%</small></div>
              <i class="meter"><u></u></i>
              <div class="rate up"><b>1.0</b><small>K/s</small></div>
              <div class="rate dn"><b>0.4</b><small>K/s</small></div>
            </div>
            <div class="wm">www.flpdown.com</div>
          </div>
        </div>
      </div>
    </section>
  </main>
</div>

<style>
  :global(body) {
    margin: 0;
    background: #5a6269;
    overflow: hidden;
  }
  .defs {
    position: absolute;
    width: 0;
    height: 0;
  }
  .app {
    width: 1920px;
    height: 1049px;
    overflow: hidden;
    background: #5a6269;
    color: #dfe5e8;
    font-family: "Liberation Sans Narrow", "DejaVu Sans Condensed", "Noto Sans CJK SC", sans-serif;
    display: flex;
    flex-direction: column;
  }
  .cj {
    font-family: "Noto Sans CJK SC", sans-serif;
  }
  .lat {
    letter-spacing: -.8px;
  }

  /* ---------- top bars ---------- */
  .top {
    height: 88px;
    flex: none;
    box-sizing: border-box;
    padding-top: 7px;
    background: #5a6269;
    border-bottom: 1px solid #2f353a;
    box-shadow: inset 0 1px #4b5259, inset 0 6px #50575e;
  }
  .row {
    height: 40px;
    display: flex;
    align-items: center;
    box-shadow: 0 -1px #474e54;
  }
  .grip {
    flex: none;
    width: 14px;
    height: 30px;
    margin: 0 4px 0 6px;
    background: repeating-linear-gradient(#4b5259 0 1px, transparent 1px 4px);
  }
  .menu {
    flex: none;
    width: 292px;
    height: 31px;
    box-sizing: border-box;
    padding: 0 5px;
    display: flex;
    align-items: center;
    justify-content: space-between;
    background: #5b7a79;
    border: 1px solid #4c5a5e;
    font-family: "Noto Sans CJK SC", sans-serif;
    font-size: 15.500px;
    font-weight: 500;
    color: #f4f7f7;
  }
  .kcell {
    flex: none;
    width: 45px;
    height: 100%;
    display: grid;
    place-items: center;
    border-right: 1px solid #474e54;
    box-sizing: border-box;
  }
  .bigknob {
    position: relative;
    width: 24px;
    height: 24px;
    border-radius: 50%;
    background: radial-gradient(circle at 50% 40%, #4a5258, #2f3539);
    border: 1px solid #22272b;
  }
  .bigknob.arc {
    width: 23px;
    height: 23px;
    border: 2px solid #e6ecef;
    border-right-color: #3a4146;
    border-bottom-color: #c9d1d5;
    margin-left: 10px;
  }
  .bigknob.dots {
    margin-left: 10px;
    box-shadow: 0 0 0 3px #535b62, 0 0 0 4px #3b4248;
  }
  .bigknob i {
    position: absolute;
    left: 50%;
    top: 2px;
    width: 1px;
    height: 5px;
    background: #cfd6da;
  }
  .tcell {
    flex: none;
    width: 195px;
    height: 100%;
    box-sizing: border-box;
    padding-left: 3px;
    display: flex;
    align-items: center;
    gap: 4px;
    border-right: 1px solid #474e54;
  }
  .pill {
    width: 99px;
    height: 33px;
    display: flex;
    border-radius: 14px;
    overflow: hidden;
    background: #3d454b;
    box-shadow: 0 1px #2b3035;
  }
  .songsw {
    width: 34px;
    display: flex;
    flex-direction: column;
    background: #4d555b;
    font-size: 10px;
    text-align: center;
  }
  .pat {
    flex: 1;
    line-height: 17px;
    color: #7e878c;
  }
  .song {
    flex: 1;
    line-height: 15px;
    background: linear-gradient(#8db53a, #c0e050);
    color: #28320e;
    font-weight: bold;
  }
  .pbtn {
    flex: 1;
    display: grid;
    place-items: center;
    border-left: 1px solid #2d3338;
    background: linear-gradient(#4b535a, #40484e);
  }
  .pbtn.dark {
    background: #2e3439;
  }
  .rec {
    width: 26px;
    height: 26px;
    border-radius: 50%;
    display: grid;
    place-items: center;
    background: #4d555b;
    border: 1px solid #32383d;
    box-sizing: border-box;
  }
  .rec i {
    width: 11px;
    height: 11px;
    border-radius: 50%;
    background: radial-gradient(#f05a50, #b52f2a);
  }
  .tempo {
    width: 55px;
    height: 26px;
    box-sizing: border-box;
    padding-left: 4px;
    border-radius: 4px;
    background: #c8d4dc;
    color: #3a4248;
    font-family: Roboto, sans-serif;
    line-height: 26px;
    white-space: nowrap;
  }
  .tv {
    display: inline-block;
    transform: scaleX(.72);
    transform-origin: left;
  }
  .tempo b {
    font-weight: 300;
    font-size: 21px;
  }
  .tempo small {
    font-size: 13px;
  }
  .tools {
    flex: none;
    display: flex;
    gap: 3px;
    height: 100%;
    align-items: center;
    box-sizing: border-box;
  }
  .g1 {
    width: 170px;
    padding-left: 4px;
  }
  .g2 {
    width: 266px;
    margin-left: 2px;
    padding-left: 3px;
    border-left: 1px solid #474e54;
  }
  .g3 {
    padding-left: 2px;
    margin-left: 3px;
    border-left: 1px solid #474e54;
  }
  .tb {
    flex: none;
    width: 30px;
    height: 33px;
    box-sizing: border-box;
    display: grid;
    place-items: center;
    border-radius: 4px;
    border: 1px solid #2d3338;
    background: linear-gradient(#4d555c, #3e464c);
    box-shadow: inset 0 1px #5e666d;
  }
  .tb.on {
    background: radial-gradient(circle, #ffc27a, #e2882a);
    border-color: #9c5a18;
  }
  .tb.lit {
    background: linear-gradient(#55696a, #4a5e60);
  }
  .tb.cart {
    background: linear-gradient(#51605f, #465453);
  }
  .ratio {
    font-size: 13px;
    font-style: italic;
    color: #c5ccd0;
  }
  .time {
    position: relative;
    flex: none;
    width: 128px;
    height: 33px;
    background: #556065;
    border: 1px solid #4d575c;
    box-sizing: border-box;
    display: flex;
    align-items: flex-end;
    padding-left: 33px;
    color: #e3e8ea;
    font-family: Roboto, sans-serif;
    font-weight: 300;
    line-height: 1;
  }
  .big {
    flex: none;
    width: 55px;
    font-size: 37px;
    margin-bottom: -2px;
    transform: scaleX(.78);
    transform-origin: left;
    white-space: nowrap;
  }
  .sm {
    font-size: 22px;
    margin: 0 0 1px 0;
    transform: scaleX(.85);
    transform-origin: left;
  }
  .mscs {
    position: absolute;
    right: 3px;
    top: 1px;
    font-family: "DejaVu Sans Condensed", sans-serif;
    font-size: 8px;
    line-height: 10px;
    font-weight: bold;
    color: #c5ccd0;
  }
  .scope {
    flex: none;
    width: 87px;
    height: 33px;
    margin-left: 6px;
    background: #2f373c;
    border-radius: 2px;
  }
  .vols {
    position: relative;
    flex: none;
    width: 77px;
    height: 33px;
    margin-left: 2px;
    display: flex;
    flex-direction: column;
    gap: 1px;
    align-self: flex-start;
    padding-top: 3px;
  }
  .vols i {
    height: 10px;
    background: linear-gradient(90deg, #e6e4d0, #e3d4a8 70%, #d58a70);
  }
  .tiny {
    position: absolute;
    right: 4px;
    top: 26px;
    width: 10px;
    height: 10px;
    border-radius: 50%;
    background: #3e454b;
    border: 1px solid #6a7278;
    box-sizing: border-box;
  }
  .mon {
    flex: none;
    width: 150px;
    height: 33px;
    margin-left: 7px;
    display: flex;
    background: #2f373c;
    font-size: 13px;
    color: #c8ced2;
  }
  .cpu {
    position: relative;
    width: 85px;
    background: linear-gradient(#2a3136 60%, #363e43 60%);
  }
  .pk {
    position: absolute;
    left: 1px;
    top: 3px;
    width: 9px;
    height: 12px;
    background: #dfe5e8;
  }
  .n1 {
    position: absolute;
    right: 3px;
    top: 2px;
  }
  .graph {
    position: absolute;
    left: 0;
    bottom: 0;
  }
  .mem {
    flex: 1;
    display: flex;
    flex-direction: column;
    align-items: flex-end;
    padding: 2px 3px 0 0;
    line-height: 15px;
  }
  .n2 {
    margin-right: 21px;
  }
  .win {
    margin-left: auto;
    margin-right: 4px;
    display: flex;
    gap: 3px;
  }
  .win i {
    width: 16px;
    height: 19px;
    background: #636c72;
    color: #7f888e;
    font-style: normal;
    font-size: 12px;
    line-height: 19px;
    text-align: center;
  }
  .song-panel {
    position: relative;
    flex: none;
    width: 292px;
    height: 32px;
    box-sizing: border-box;
    padding: 0 2px 0 3px;
    background: #3f4a52;
    font-size: 12px;
    line-height: 16px;
    color: #c9d0d4;
    white-space: nowrap;
    overflow: hidden;
  }
  .song-panel .l2 {
    display: flex;
    justify-content: space-between;
    padding-right: 20px;
  }
  .bell {
    position: absolute;
    right: 3px;
    bottom: 1px;
  }
  .dim {
    color: #87939a;
    letter-spacing: -.6px;
  }
  .slider {
    padding-left: 12px;
  }
  .track {
    position: relative;
    width: 172px;
    height: 5px;
    border-radius: 3px;
    background: #4c545a;
  }
  .handle {
    position: absolute;
    left: 4px;
    top: -6px;
    width: 16px;
    height: 17px;
    border-radius: 8px;
    background: linear-gradient(90deg, #2d3338 45%, #c9c64e 45% 55%, #2d3338 55%);
  }
  .magnet {
    margin-left: 5px;
    flex: none;
  }
  .snap {
    position: relative;
    flex: none;
    width: 62px;
    height: 23px;
    margin-left: 4px;
    box-sizing: border-box;
    padding-left: 4px;
    background: #31383d;
    border-radius: 2px;
    font-family: "Noto Sans CJK SC", sans-serif;
    font-size: 12px;
    line-height: 23px;
    color: #9aa3a8;
  }
  .snap em, .parr em {
    position: absolute;
    top: 50%;
    margin-top: -4px;
    border: 4px solid transparent;
    border-left: 5px solid #7c858a;
    border-right: 0;
  }
  .snap em {
    right: 5px;
  }
  .patbox {
    flex: none;
    display: flex;
    height: 26px;
    margin-left: 11px;
  }
  .parr {
    position: relative;
    width: 16px;
    background: #3e464c;
    border: 1px solid #2d3338;
    box-sizing: border-box;
    border-radius: 3px 0 0 3px;
  }
  .parr em {
    left: 5px;
    border-left-color: #b6bec2;
  }
  .pname {
    width: 94px;
    box-sizing: border-box;
    padding-right: 9px;
    text-align: right;
    background: #c8d5de;
    color: #30373c;
    line-height: 26px;
    white-space: nowrap;
  }
  .pname b {
    font-family: "Noto Sans CJK SC", sans-serif;
    font-weight: 400;
    font-size: 18px;
  }
  .pname span {
    font-size: 19px;
    letter-spacing: -1px;
    color: #5c666d;
    margin-left: 3px;
  }
  .pplus {
    width: 17px;
    background: #3e464c;
    border: 1px solid #2d3338;
    box-sizing: border-box;
    border-radius: 0 3px 3px 0;
    text-align: center;
    line-height: 23px;
    font-size: 15px;
  }
  .news {
    flex: none;
    width: 163px;
    height: 32px;
    margin-left: 4px;
    box-sizing: border-box;
    padding: 0 4px;
    display: flex;
    align-items: center;
    justify-content: space-between;
    background: #4c6265;
    font-size: 12.500px;
    line-height: 15px;
    letter-spacing: -.3px;
    color: #dbe2e3;
    white-space: pre;
  }
  .dimn {
    color: #96a4a8;
  }

  /* ---------- panes ---------- */
  .panes {
    flex: none;
    height: 956px;
    display: flex;
  }
  .rack {
    flex: none;
    width: 506px;
    box-sizing: border-box;
    border-right: 1px solid #2c3237;
    border-left: 1px solid #424a50;
    border-bottom: 1px solid #343a3f;
    display: flex;
    flex-direction: column;
    background: #4d555c;
  }
  .rbar {
    position: relative;
    flex: none;
    height: 30px;
  }
  .rbar > * {
    position: absolute;
  }
  .tri {
    left: 20px;
    top: 10px;
  }
  .undo {
    left: 39px;
    top: 9px;
  }
  .unsorted {
    left: 114px;
    top: 6px;
    width: 80px;
    height: 19px;
    background: #454d53;
    font-size: 12.500px;
    line-height: 19px;
    padding-left: 2px;
    box-sizing: border-box;
    color: #7d868b;
  }
  .unsorted em {
    position: absolute;
    right: 5px;
    top: 6px;
    border: 4px solid transparent;
    border-left: 4px solid #697277;
    border-right: 0;
  }
  .vdots {
    left: 209px;
    top: 7px;
    width: 2px;
    height: 16px;
    background: repeating-linear-gradient(#7c858a 0 2px, transparent 2px 4px);
  }
  .spk {
    left: 224px;
    top: 8px;
  }
  .rtitle {
    left: 242px;
    top: 5px;
    font-family: "Noto Sans CJK SC", sans-serif;
    font-size: 13.500px;
    color: #8f989d;
  }
  .rk {
    left: 360px;
    top: 5px;
    width: 20px;
    height: 20px;
    border-radius: 50%;
    background: #4a5258;
    border: 1px solid #40474d;
    box-sizing: border-box;
  }
  .rbox {
    left: 389px;
    top: 4px;
    width: 36px;
    height: 24px;
    border: 1px solid #42494f;
    border-radius: 3px;
    box-sizing: border-box;
  }
  .rbars {
    left: 438px;
    top: 9px;
  }
  .rgrid {
    left: 460px;
    top: 9px;
  }
  .rx {
    left: 483px;
    top: 8px;
    font-size: 12px;
    color: #a5adb1;
  }
  .rbody {
    position: relative;
    flex: none;
    height: 896px;
    margin-left: 9px;
    width: 490px;
    overflow: hidden;
    background: #5f6a72;
    border-top: 1px solid #3b4248;
    border-bottom: 1px solid #373d42;
    box-sizing: border-box;
  }
  .rows {
    margin-top: -22px;
  }
  .crow {
    height: 30px;
    position: relative;
    display: flex;
    align-items: center;
  }
  .led {
    flex: none;
    width: 9px;
    height: 9px;
    margin-left: 9px;
    box-sizing: border-box;
    border-radius: 50%;
    background: radial-gradient(#d2ef6b, #9fbe3b);
    box-shadow: 0 0 0 2px #3d5b2c, 0 0 2px 3px rgba(120, 190, 70, .35);
  }
  .sk {
    position: relative;
    flex: none;
    width: 14px;
    height: 14px;
    margin-left: 3px;
    border-radius: 50%;
    background: radial-gradient(circle at 50% 35%, #5a6268, #2f353a);
    box-shadow: 0 1px #2a3035;
  }
  .led + .sk {
    margin-left: 7px;
  }
  .sk::after, .sk u {
    content: "";
    position: absolute;
    left: 6px;
    top: 1px;
    width: 2px;
    height: 5px;
    background: #e7ecee;
    transform-origin: 1px 6px;
  }
  .sk:has(u)::after {
    display: none;
  }
  .num {
    flex: none;
    width: 32px;
    height: 24px;
    margin-left: 7px;
    box-sizing: border-box;
    border: 1px solid #454c52;
    border-radius: 4px;
    background: #596269;
    text-align: center;
    font-weight: normal;
    font-size: 17px;
    line-height: 22px;
    letter-spacing: -.8px;
    color: #a2aab0;
  }
  .cbtn {
    flex: none;
    width: 82px;
    height: 26px;
    margin-left: 9px;
    box-sizing: border-box;
    border-radius: 2px;
    border-bottom: 2px solid #2f363b;
    text-align: center;
    font-weight: normal;
    font-size: 12px;
    line-height: 23px;
    white-space: nowrap;
    overflow: hidden;
    color: #d7dcdf;
  }
  .cbtn.d {
    background: #434e53;
  }
  .cbtn.r {
    background: #6d4b4d;
    color: #e4d8d8;
  }
  .cbtn.b {
    background: #52658c;
    color: #e3e8f0;
    font-size: 11.500px;
  }
  .cbtn.h {
    background: #c2504a;
    color: #f9e6e4;
  }
  .strip {
    flex: none;
    width: 6px;
    height: 21px;
    margin-left: 9px;
    background: #3f474d;
    border: 1px solid #33393e;
    box-sizing: border-box;
    border-radius: 1px;
  }
  .strip.sel {
    height: 25px;
    width: 8px;
    margin: 0 -1px 0 8px;
    border: 1px solid #b5d84a;
  }
  .steps {
    display: flex;
    gap: 4px;
    margin-left: 13px;
  }
  .st {
    position: relative;
    display: block;
    width: 12px;
    height: 22px;
    box-sizing: border-box;
    border-radius: 3px;
    border: 1px solid #363c41;
    background: linear-gradient(#62696f, #4e555b);
  }
  .st.red {
    background: linear-gradient(#715654, #5c4647);
    border-color: #3f3536;
  }
  .st::after {
    content: "";
    position: absolute;
    left: 3px;
    top: 3px;
    width: 4px;
    height: 1px;
    background: #23282c;
  }
  .proll {
    position: relative;
    width: 257px;
    height: 30px;
    margin-left: 10px;
    background: #3e4549;
    border: 1px solid #333a3f;
    box-sizing: border-box;
  }
  .proll i {
    position: absolute;
    left: 0;
    right: 0;
    bottom: 3px;
    height: 3px;
    background: #8fc8a4;
  }
  .vbar {
    position: absolute;
    right: 7px;
    top: 0;
    bottom: 0;
    width: 8px;
  }
  .vbar i {
    position: absolute;
    left: 3px;
    top: 179px;
    height: 698px;
    width: 3px;
    background: #3f474d;
  }
  .cv {
    position: absolute;
    left: 0;
    width: 6px;
    height: 6px;
    border: 2px solid #7e878c;
    border-width: 2px 0 0 2px;
    transform: rotate(45deg);
  }
  .cv.up {
    top: 8px;
  }
  .cv.dn {
    bottom: 8px;
    transform: rotate(225deg);
  }
  .rfoot {
    position: relative;
    flex: 1;
  }
  .plus {
    position: absolute;
    left: 149px;
    top: 3px;
    font-size: 18px;
    font-weight: bold;
    line-height: 20px;
    color: #d3d9dc;
  }
  .hbar {
    position: absolute;
    left: 211px;
    right: 16px;
    top: 0;
    bottom: 0;
  }
  .htrack {
    position: absolute;
    left: 9px;
    right: 6px;
    top: 0;
    height: 8px;
    background: #3d454b;
  }
  .hctl {
    position: absolute;
    left: 0;
    right: 0;
    top: 12px;
    display: flex;
    align-items: center;
    justify-content: space-between;
    font-size: 14px;
    color: #868f94;
    line-height: 14px;
  }
  .hctl b {
    width: 22px;
    height: 3px;
    background: #2f353a;
    margin-right: auto;
    margin-left: 3px;
  }

  .playlist {
    flex: 1;
    min-width: 0;
    display: flex;
    flex-direction: column;
    height: 956px;
    background: #3f474e;
  }
  .pbar {
    position: relative;
    flex: none;
    height: 30px;
    display: flex;
    align-items: center;
    padding-left: 14px;
  }
  .pt1 {
    margin-left: 14px;
  }
  .ptools {
    display: flex;
    gap: 5px;
    margin-left: 12px;
  }
  .pt2 {
    margin-left: 19px;
  }
  .crumb {
    margin-left: 5px;
    font-size: 13.500px;
    color: #cbd2d6;
    white-space: nowrap;
  }
  .crumb em {
    display: inline-block;
    margin: 0 6px;
    border: 4px solid transparent;
    border-left: 5px solid #7f888d;
    border-right: 0;
  }
  .pwin {
    margin-left: auto;
    margin-right: 6px;
    display: flex;
    align-items: center;
    gap: 10px;
  }
  .min {
    width: 7px;
    height: 2px;
    margin-bottom: 6px;
    background: #dfe5e8;
  }
  .box {
    width: 7px;
    height: 6px;
    border: 1px solid #dfe5e8;
    border-top-width: 2px;
  }
  .pwin span {
    font-size: 12px;
    font-weight: bold;
    color: #e6ebed;
  }
  .pmain {
    flex: 1;
    display: flex;
    min-height: 0;
  }
  .picker {
    flex: none;
    width: 167px;
    display: flex;
    flex-direction: column;
  }
  .ptabs {
    flex: none;
    height: 40px;
    display: flex;
    align-items: center;
    gap: 26px;
    padding: 8px 0 0 18px;
    box-sizing: border-box;
  }
  .pick-body {
    flex: 1;
    display: flex;
    margin-left: 6px;
    background: #2f3a42;
    border: 1px solid #262d33;
    border-bottom: 1px solid #22282d;
    min-height: 0;
  }
  .plist {
    width: 140px;
    padding: 2px 2px 0 3px;
    box-sizing: border-box;
    display: flex;
    flex-direction: column;
    gap: 4px;
  }
  .pi {
    position: relative;
    flex: none;
    height: 27px;
    box-sizing: border-box;
    display: flex;
    align-items: center;
    gap: 2px;
    padding-left: 2px;
    background: #464d52;
    box-shadow: 0 1px #394046;
    font-size: 14.500px;
    color: #d8dee1;
    overflow: hidden;
  }
  .pn {
    position: relative;
    margin-top: -3px;
  }
  .pi.c0 {
    background: #4d5358;
  }
  .pi.c1 {
    background: #4f5580;
  }
  .pi.c2 {
    background: #6e7d5b;
  }
  .pi.c3 {
    background: #3f7f7c;
  }
  .pi.c4 {
    background: #597a50;
  }
  .pi.c5 {
    background: #557590;
  }
  .pi.c6 {
    background: #4b8a9b;
  }
  .pi.sel {
    border: 1px solid #b5d84a;
    overflow: visible;
    padding-left: 1px;
  }
  .pdeco {
    position: absolute;
    left: 0;
    top: 0;
  }
  .pic {
    position: relative;
    flex: none;
  }
  .cue {
    position: absolute;
    left: -3px;
    top: 7px;
    border: 6px solid transparent;
    border-left: 7px solid #d9324f;
    border-right: 0;
  }
  .pscroll {
    flex: 1;
    margin-left: 2px;
    background: #39434b;
    border-left: 1px solid #262d33;
    border-right: 1px solid #262d33;
    text-align: center;
    font-size: 10px;
    line-height: 15px;
    color: #c6cdd1;
  }
  .pscroll span {
    display: block;
    height: 15px;
    background: #4a5259;
  }
  .pfoot {
    flex: none;
    height: 16px;
    box-sizing: border-box;
    padding-right: 16px;
    text-align: center;
    font-size: 17px;
    font-weight: bold;
    line-height: 20px;
    color: #d3d9dc;
  }
  .arr {
    flex: 1;
    min-width: 0;
    display: flex;
    flex-direction: column;
  }
  .rul {
    flex: none;
    height: 39px;
    display: flex;
  }
  .corner {
    flex: none;
    width: 110px;
    box-sizing: border-box;
    background: #4d555b;
    clip-path: polygon(15px 0, 100% 0, 100% 100%, 0 100%, 0 24px);
  }
  .cicons {
    display: flex;
    align-items: center;
    justify-content: flex-end;
    gap: 12px;
    padding: 1px 3px 0 0;
    height: 19px;
  }
  .clabs {
    display: flex;
    justify-content: flex-end;
    gap: 9px;
    padding: 2px 2px 0 0;
    font-family: "Noto Sans CJK SC", sans-serif;
    font-size: 8px;
    line-height: 14px;
    color: #667075;
  }
  .clabs b {
    font-weight: 500;
    color: #cbd2d6;
  }
  .rright {
    flex: 1;
    min-width: 0;
    display: flex;
    flex-direction: column;
  }
  .ovw {
    flex: none;
    height: 18px;
    display: flex;
  }
  .nav {
    flex: none;
    width: 21px;
    background: #4a5259;
    border: 1px solid #343b40;
    box-sizing: border-box;
    text-align: center;
    font-size: 16px;
    line-height: 14px;
    color: #aab2b7;
  }
  .nav.r {
    width: 19px;
    margin-left: 20px;
  }
  .nav.d {
    width: 23px;
    font-size: 10px;
  }
  .strip-ov {
    position: relative;
    flex: 1;
    min-width: 0;
    overflow: hidden;
    background: #48555e;
  }
  .strip-ov i {
    position: absolute;
    height: 1.500px;
    opacity: .85;
  }
  .ph {
    position: absolute;
    left: 47px;
    top: 0;
    bottom: 0;
    width: 1.500px;
    background: #b5e04a;
  }
  .barline {
    flex: 1;
    display: flex;
  }
  .bars {
    position: relative;
    flex: 1;
    min-width: 0;
    background: #27333c;
    font-size: 13px;
    letter-spacing: -.7px;
    color: #bcc5ca;
    overflow: hidden;
  }
  .bars span {
    position: absolute;
    top: 3px;
  }
  .upbtn {
    position: relative;
    flex: none;
    width: 22px;
    background: #3f4a53;
  }
  .upbtn .cv {
    left: 8px;
  }
  .mark {
    position: absolute;
    left: 45px;
    top: 2px;
    border: 7px solid transparent;
    border-top: 11px solid #a8dc34;
    border-bottom: 0;
  }
  .fold {
    position: absolute;
    left: 11px;
    top: -1px;
    border: 8px solid transparent;
    border-top: 7px solid #36424b;
    border-bottom: 0;
  }
  .lanes {
    position: relative;
    flex: 1;
    min-height: 0;
    display: flex;
    overflow: hidden;
  }
  .heads {
    flex: none;
    width: 100px;
    background: #303941;
  }
  .th {
    position: relative;
    box-sizing: border-box;
    padding: 0 0 0 2px;
    background: linear-gradient(#4b5359, #41494f);
    clip-path: polygon(0 0, 100% 0, 100% calc(100% - 6px), calc(100% - 5px) 100%, 0 100%);
    font-size: 14.500px;
    line-height: 18px;
    color: #c4ccd1;
  }
  .th > span {
    display: inline-block;
    transform: scaleX(.84);
    transform-origin: left;
  }
  .th.off {
    color: #6d777d;
  }
  .th small {
    position: absolute;
    left: 18px;
    bottom: 1px;
    font-size: 10px;
    color: #636d73;
  }
  .tled {
    position: absolute;
    right: 5px;
    bottom: 6px;
    width: 7px;
    height: 7px;
    border-radius: 50%;
    background: #b9dc4a;
    box-shadow: 0 0 0 2px #3f5a30, 0 0 0 3px #29323a;
  }
  .marks {
    flex: none;
    width: 10px;
    background: #2f3c46;
  }
  .mk {
    box-sizing: border-box;
    padding: 1px 0 1px 1px;
  }
  .mk i {
    display: block;
    height: 100%;
  }
  .canvas {
    position: relative;
    flex: 1;
    min-width: 0;
    overflow: hidden;
    background-color: #2f4250;
    background-image: linear-gradient(90deg, #1c2931 0 1.400px, transparent 1.400px);
    background-size: 16.750px 100%;
    background-position: 1px 0;
  }
  .sep {
    position: absolute;
    left: 0;
    right: 0;
    height: 1.500px;
    background: #1a252d;
  }
  .clip {
    position: absolute;
    overflow: hidden;
  }
  .head {
    height: 14px;
    margin-bottom: 1px;
    border-radius: 2px;
    display: flex;
    align-items: center;
    gap: 1px;
    padding-left: 2px;
    box-sizing: border-box;
    overflow: hidden;
    white-space: nowrap;
    font-size: 12px;
    line-height: 14px;
    color: #e4e8e6;
  }
  .head .cj {
    font-size: 12px;
  }
  .head .lat {
    letter-spacing: -1px;
  }
  .lb {
    flex: none;
  }
  .head.dl .lb {
    opacity: .22;
  }
  .head.hs {
    background-image: repeating-linear-gradient(90deg, rgba(0, 0, 0, .18) 0 1.500px, rgba(255, 255, 255, .05) 1.500px 3px);
  }
  .ci {
    flex: none;
  }
  .bd {
    display: block;
  }
  .bd.dark {
    background: rgba(28, 36, 42, .5);
  }
  .thin {
    position: absolute;
    width: 1px;
    background: #c9d1d5;
  }
  .glow {
    position: absolute;
    left: 35px;
    top: 0;
    bottom: 0;
    width: 18px;
    background: linear-gradient(90deg, rgba(90, 170, 40, 0), rgba(110, 190, 50, .7));
    pointer-events: none;
  }
  .playhead {
    position: absolute;
    left: 51px;
    top: 0;
    bottom: 0;
    width: 2px;
    background: #9fe044;
  }
  .sec {
    position: absolute;
    right: 0;
    top: 352px;
    width: 40px;
    height: 130px;
    box-sizing: border-box;
    padding-top: 2px;
    background: rgba(47, 60, 70, .85);
    display: flex;
    flex-direction: column;
    align-items: center;
    color: #dfe5e8;
  }
  .pc b {
    font-size: 15px;
  }
  .pc small {
    font-size: 9px;
  }
  .pc {
    margin-top: 8px;
    line-height: 18px;
  }
  .meter {
    display: block;
    width: 27px;
    height: 5px;
    background: #46525b;
    margin-top: 2px;
  }
  .meter u {
    display: block;
    width: 9px;
    height: 5px;
    background: #4fc4a2;
  }
  .rate {
    position: relative;
    margin-top: 4px;
    padding-left: 12px;
    display: flex;
    flex-direction: column;
    line-height: 12px;
  }
  .rate.up {
    margin-top: 8px;
  }
  .rate b {
    font-size: 13px;
    font-weight: normal;
  }
  .rate small {
    font-size: 10px;
    color: #8d989f;
  }
  .rate::before {
    content: "";
    position: absolute;
    left: 2px;
    top: 8px;
    width: 2px;
    height: 9px;
    background: #3fa0d0;
  }
  .rate.dn::before {
    background: #3fb06c;
  }
  .wm {
    position: absolute;
    right: 26px;
    bottom: 20px;
    font-family: "DejaVu Sans", sans-serif;
    font-weight: bold;
    font-size: 20.500px;
    line-height: 24px;
    letter-spacing: -.2px;
    color: #f4f6f6;
  }
  .sbar {
    position: relative;
    flex: none;
    width: 22px;
    background: #39434b;
  }
  .sbar i {
    position: absolute;
    left: 1px;
    right: 1px;
    top: 0;
    height: 31px;
    background: #56606a;
  }
  .sbar .cv {
    left: 7px;
    bottom: 8px;
  }
</style>
